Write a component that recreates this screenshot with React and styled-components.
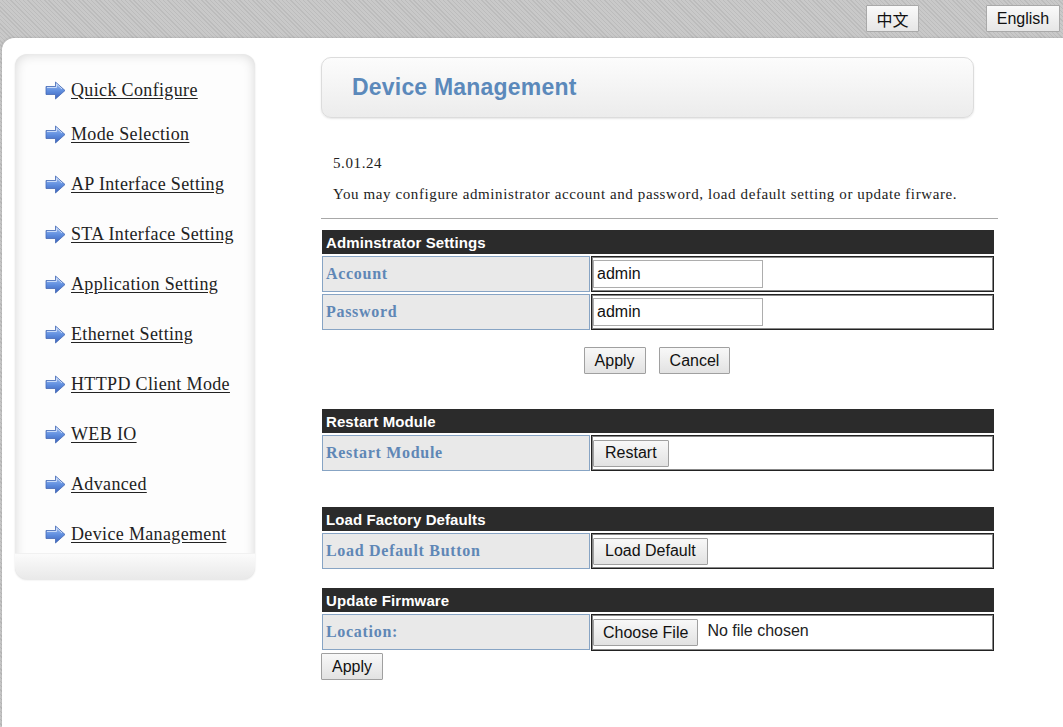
import styled, { createGlobalStyle } from 'styled-components'

const GlobalStyle = createGlobalStyle`
  html, body {
    margin: 0;
    padding: 0;
  }
  body {
    background-color: #c5c5c5;
    background-image: repeating-linear-gradient(45deg, #c9c9c9 0 2px, #bcbcbc 2px 3px);
    font-family: "Liberation Serif", "Times New Roman", serif;
    color: #222;
  }
`

const Page = styled.div`
  display: flex;
  flex-direction: column;
  min-height: 727px;
`

const TopBar = styled.div`
  display: flex;
  justify-content: flex-end;
  align-items: flex-start;
  height: 38px;
  box-sizing: border-box;
  padding: 5px 3px 0 0;
  gap: 67px;
`

const LangButton = styled.button`
  height: 27px;
  min-width: ${p => p.$w}px;
  padding: 0 8px;
  font-family: "Liberation Sans", Arial, "Noto Sans CJK SC", sans-serif;
  font-size: 16px;
  color: #111;
  background: linear-gradient(#fafafa, #e6e6e6);
  border: 1px solid #a9a9a9;
  border-radius: 1px;
`

const Panel = styled.div`
  flex: 1;
  display: flex;
  align-items: flex-start;
  margin-left: 2px;
  background: #fff;
  border-top-left-radius: 12px;
  box-shadow: -1px -1px 2px rgba(0, 0, 0, 0.08);
  padding: 16px 0 40px 13px;
`

/* left menu */
const Sidebar = styled.nav`
  width: 240px;
  flex-shrink: 0;
  border-radius: 12px;
  background: #fdfdfd;
  box-shadow: inset 0 0 12px rgba(0, 0, 0, 0.16), 0 1px 2px rgba(0, 0, 0, 0.12);
  overflow: hidden;
`

const MenuList = styled.ul`
  list-style: none;
  margin: 0;
  padding: 24px 0 7px 30px;
`

const MenuItem = styled.li`
  display: flex;
  align-items: center;
  gap: 5px;
  height: 24px;
  margin-bottom: ${p => (p.$first ? 20 : 26)}px;
  &:last-child {
    margin-bottom: 0;
  }
`

const MenuLink = styled.a`
  font-size: 18px;
  letter-spacing: 0.35px;
  color: #222;
  text-decoration: underline;
  text-underline-offset: 2px;
  cursor: pointer;
`

const SidebarFoot = styled.div`
  height: 25px;
  background: linear-gradient(#fbfbfb, #e9e9e9);
  border-top: 1px solid #f1f1f1;
`

const Content = styled.main`
  width: 677px;
  margin-left: 66px;
  margin-top: 3px;
`

const TitleBox = styled.div`
  width: 653px;
  height: 61px;
  box-sizing: border-box;
  display: flex;
  align-items: center;
  padding-left: 30px;
  border: 1px solid #dcdcdc;
  border-radius: 10px;
  background: linear-gradient(#fcfcfc, #ececec);
  box-shadow: 0 1px 2px rgba(0, 0, 0, 0.1);
`

const Title = styled.h1`
  margin: 0;
  font-family: "Liberation Sans", Arial, sans-serif;
  font-size: 23px;
  letter-spacing: 0.2px;
  font-weight: bold;
  color: #5b89bb;
`

const Text = styled.p`
  margin: ${p => p.$top}px 0 0 12px;
  font-size: 15px;
  letter-spacing: 0.6px;
  line-height: 20px;
  color: #222;
`

const Rule = styled.hr`
  margin: 14px 0 0 0;
  border: 0;
  border-top: 1px solid #a8a8a8;
`

const Section = styled.section`
  width: 672px;
  margin: ${p => p.$top}px 0 0 1px;
  display: grid;
  grid-template-columns: 268px 1fr;
  column-gap: 1px;
  row-gap: 2px;
`

const SectionHead = styled.div`
  grid-column: 1 / -1;
  height: 24px;
  display: flex;
  align-items: center;
  padding-left: 4px;
  background: #2b2b2b;
  color: #fff;
  font-family: "Liberation Sans", Arial, sans-serif;
  font-size: 15px;
  font-weight: bold;
  letter-spacing: 0.1px;
`

const LabelCell = styled.div`
  height: 36px;
  box-sizing: border-box;
  display: flex;
  align-items: center;
  padding-left: 3px;
  background: #e9e9e9;
  border: 1px solid #87a4c4;
  color: #5f87b6;
  font-size: 16px;
  letter-spacing: 0.7px;
  font-weight: bold;
`

const ValueCell = styled.div`
  height: ${p => p.$h || 36}px;
  box-sizing: border-box;
  display: flex;
  align-items: center;
  padding-left: 1px;
  border: 1px solid #222;
  box-shadow: inset 0 0 0 1px #888;
  font-family: "Liberation Sans", Arial, sans-serif;
  font-size: 16px;
  color: #222;
`

const TextInput = styled.input`
  width: 170px;
  height: 28px;
  box-sizing: border-box;
  padding: 0 3px;
  border: 1px solid #adadad;
  font-family: "Liberation Sans", Arial, sans-serif;
  font-size: 16px;
  color: #111;
`

const Button = styled.button`
  height: 27px;
  padding: 0 ${p => p.$pad || 10}px;
  font-family: "Liberation Sans", Arial, sans-serif;
  font-size: 16px;
  color: #111;
  background: linear-gradient(#f8f8f8, #e2e2e2);
  border: 1px solid #a0a0a0;
  border-radius: 1px;
  cursor: pointer;
`

const ButtonRow = styled.div`
  display: flex;
  justify-content: center;
  gap: 13px;
  width: 672px;
  margin-top: 17px;
`

const FileNote = styled.span`
  margin-left: 9px;
  margin-top: -3px;
`

const TailButton = styled(Button)`
  display: block;
  margin-top: 2px;
`

function ArrowIcon() {
  return (
    <svg width="21" height="19" viewBox="0 0 21 19">
      <defs>
        <linearGradient id="arrowFill" x1="0" y1="0" x2="0" y2="1">
          <stop offset="0" stopColor="#a6c2f2" />
          <stop offset="0.5" stopColor="#6290e0" />
          <stop offset="1" stopColor="#3a62bd" />
        </linearGradient>
      </defs>
      <path
        d="M1 5.5 H10.5 V1 L20 9.5 L10.5 18 V13.5 H1 Z"
        fill="url(#arrowFill)"
        stroke="#4468b4"
        strokeWidth="0.8"
        strokeLinejoin="round"
      />
      <path d="M2 6.5 H11.5 V3 L17 8" fill="none" stroke="#d3e2fb" strokeWidth="0.9" />
    </svg>
  )
}

const menu = [
  'Quick Configure',
  'Mode Selection',
  'AP Interface Setting',
  'STA Interface Setting',
  'Application Setting',
  'Ethernet Setting',
  'HTTPD Client Mode',
  'WEB IO',
  'Advanced',
  'Device Management',
]

export default function App() {
  return (
    <Page>
      <GlobalStyle />
      <TopBar>
        <LangButton $w={53}>中文</LangButton>
        <LangButton $w={74}>English</LangButton>
      </TopBar>
      <Panel>
        <Sidebar>
          <MenuList>
            {menu.map((item, i) => (
              <MenuItem key={item} $first={i === 0}>
                <ArrowIcon />
                <MenuLink>{item}</MenuLink>
              </MenuItem>
            ))}
          </MenuList>
          <SidebarFoot />
        </Sidebar>

        <Content>
          <TitleBox>
            <Title>Device Management</Title>
          </TitleBox>
          <Text $top={35}>5.01.24</Text>
          <Text $top={11}>
            You may configure administrator account and password, load default setting or update firware.
          </Text>
          <Rule />

          <Section $top={11}>
            <SectionHead>Adminstrator Settings</SectionHead>
            <LabelCell>Account</LabelCell>
            <ValueCell>
              <TextInput defaultValue="admin" />
            </ValueCell>
            <LabelCell>Password</LabelCell>
            <ValueCell>
              <TextInput defaultValue="admin" />
            </ValueCell>
          </Section>
          <ButtonRow>
            <Button>Apply</Button>
            <Button>Cancel</Button>
          </ButtonRow>

          <Section $top={35}>
            <SectionHead>Restart Module</SectionHead>
            <LabelCell>Restart Module</LabelCell>
            <ValueCell>
              <Button $pad={11}>Restart</Button>
            </ValueCell>
          </Section>

          <Section $top={36}>
            <SectionHead>Load Factory Defaults</SectionHead>
            <LabelCell>Load Default Button</LabelCell>
            <ValueCell>
              <Button $pad={11}>Load Default</Button>
            </ValueCell>
          </Section>

          <Section $top={19}>
            <SectionHead>Update Firmware</SectionHead>
            <LabelCell>Location:</LabelCell>
            <ValueCell $h={37}>
              <Button $pad={9}>Choose File</Button>
              <FileNote>No file chosen</FileNote>
            </ValueCell>
          </Section>
          <TailButton>Apply</TailButton>
        </Content>
      </Panel>
    </Page>
  )
}
